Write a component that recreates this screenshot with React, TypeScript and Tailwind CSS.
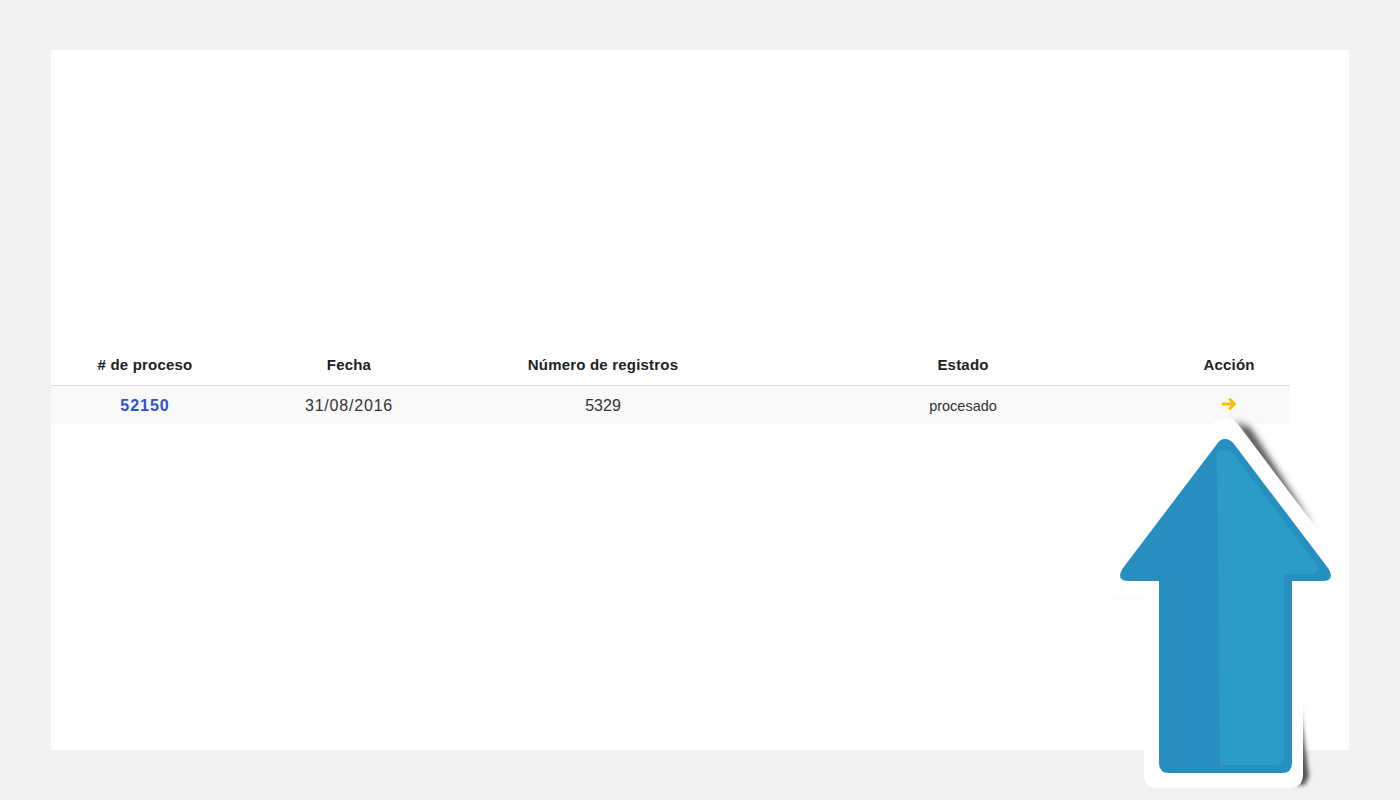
const headers = [
  { label: "# de proceso", width: "w-[188px]" },
  { label: "Fecha", width: "w-[220px]" },
  { label: "Número de registros", width: "w-[288px]" },
  { label: "Estado", width: "w-[432px]" },
  { label: "Acción", width: "w-[111px] pr-[11px]" },
];

const StickerArrow = () => {
  const outline =
    "M1225 418 Q1234 418 1240 427 L1345 566 Q1352 596 1322 596 L1303 596 L1303 774 Q1303 788 1289 788 L1158 788 Q1144 788 1144 774 L1144 596 L1118 596 Q1094 590 1106 566 L1210 427 Q1216 418 1225 418 Z";
  return (
    <svg
      className="absolute left-0 top-0 pointer-events-none"
      width="1400"
      height="800"
      viewBox="0 0 1400 800"
    >
      <defs>
        <filter id="soft" x="-30%" y="-30%" width="160%" height="160%">
          <feGaussianBlur stdDeviation="3.5" />
        </filter>
        <filter id="softer" x="-30%" y="-30%" width="160%" height="160%">
          <feGaussianBlur stdDeviation="2.2" />
        </filter>
      </defs>
      <path d="M1234 421 L1250 428 L1314 528 L1280 490 Z" fill="#444" filter="url(#soft)" />
      <path d="M1299 700 L1309 776 L1305 785 L1295 785 Z" fill="#555" filter="url(#softer)" />
      <path d="M1112 596 L1144 596 L1144 599 L1112 598 Z" fill="#eee" filter="url(#softer)" opacity="0.4" />
      <path d={outline} fill="#fff" />
      <path
        d="M1225 439 Q1230 439 1234 444 L1328 568 Q1336 581 1322 581 L1292 581 L1292 763 Q1292 773 1282 773 L1169 773 Q1159 773 1159 763 L1159 581 L1129 581 Q1115 581 1123 568 L1217 444 Q1220 439 1225 439 Z"
        fill="#268fc0"
      />
      <path
        d="M1217 454 Q1218 450 1226 450 Q1231 450 1235 456 L1315 562 Q1322 574 1310 574 L1284 574 L1284 757 Q1284 765 1276 765 L1220 765 Z"
        fill="#2b9cc5"
      />
    </svg>
  );
};

export default function App() {
  return (
    <div className="relative h-[800px] w-[1400px] overflow-hidden bg-[#f1f1f1] pt-[50px] pl-[51px] font-['Liberation_Sans',sans-serif]">
      <div className="h-[700px] w-[1298px] bg-white pt-[295px]">
        <table className="w-[1239px] table-fixed border-collapse text-center">
          <thead>
            <tr className="h-[40px] border-b border-[#dcdcdc]">
              {headers.map((h) => (
                <th key={h.label} className={`${h.width} text-[15px] font-bold tracking-[0.2px] text-[#222]`}>
                  {h.label}
                </th>
              ))}
            </tr>
          </thead>
          <tbody>
            <tr className="h-[39px] bg-[#f9f9f9] text-[16px] text-[#333]">
              <td className="pt-[3px] font-bold tracking-[1px] text-[#2c54d0]">52150</td>
              <td className="pt-[3px] tracking-[0.8px]">31/08/2016</td>
              <td className="pt-[3px]">5329</td>
              <td className="pt-[4px] text-[14.5px]">procesado</td>
              <td className="pr-[11px] pb-[4px]">
                <span className="inline-flex align-middle text-[#fdbf00]">
                  <svg width="16" height="14" viewBox="0 0 16 14" fill="none" stroke="currentColor" strokeWidth="3" strokeLinecap="round" strokeLinejoin="round">
                    <path d="M2 7H13.5M9 2.5L13.5 7L9 11.5" />
                  </svg>
                </span>
              </td>
            </tr>
          </tbody>
        </table>
      </div>
      <StickerArrow />
    </div>
  );
}
